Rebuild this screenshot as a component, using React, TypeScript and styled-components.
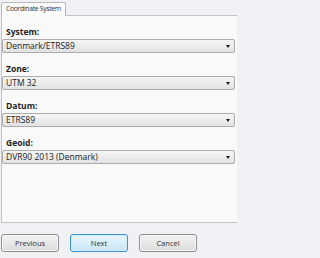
import React from 'react';
import styled, { createGlobalStyle } from 'styled-components';

const GlobalStyle = createGlobalStyle`
  html, body {
    margin: 0;
    padding: 0;
    background: #f0f0f5;
  }
  body {
    font-family: "Open Sans", "Noto Sans", sans-serif;
    color: #1e1e1e;
  }
`;

interface Field {
  label: string;
  value: string;
}

const fields: Field[] = [
  { label: 'System:', value: 'Denmark/ETRS89' },
  { label: 'Zone:', value: 'UTM 32' },
  { label: 'Datum:', value: 'ETRS89' },
  { label: 'Geoid:', value: 'DVR90 2013 (Denmark)' },
];

function Dropdown({ value }: { value: string }) {
  return (
    <UISelect>
      <UISelectText>{value}</UISelectText>
      <UIArrow viewBox="0 0 4 3" width={4} height={3}>
        <path d="M0 0 H4 L2 3 Z" fill="#1a1a1a" />
      </UIArrow>
    </UISelect>
  );
}

export default function App() {
  return (
    <>
      <GlobalStyle />
      <UIWindow>
        <UITabStrip>
          <UITab>Coordinate System</UITab>
        </UITabStrip>
        <UIPanel>
          {fields.map(field => (
            <UIField key={field.label}>
              <UILabel>{field.label}</UILabel>
              <Dropdown value={field.value} />
            </UIField>
          ))}
        </UIPanel>
        <UIButtonRow>
          <UIButton>Previous</UIButton>
          <UIButton primary>Next</UIButton>
          <UIButton>Cancel</UIButton>
        </UIButtonRow>
      </UIWindow>
    </>
  );
}

const UIWindow = styled.div`
  width: 237px;
  height: 258px;
  display: flex;
  flex-direction: column;
  box-sizing: border-box;
`;

const UITabStrip = styled.div`
  display: flex;
  padding: 2px 0 0 1px;
  height: 13px;
  position: relative;
  z-index: 1;
`;

const UITab = styled.div`
  height: 14px;
  box-sizing: border-box;
  padding: 0 4px;
  border: 1px solid #b9b9b9;
  border-bottom: none;
  border-radius: 2px 2px 0 0;
  background: #fafafa;
  font-size: 6.8px;
  letter-spacing: -0.3px;
  line-height: 12px;
  color: #333;
  white-space: nowrap;
`;

const UIPanel = styled.div`
  height: 208px;
  box-sizing: border-box;
  margin-left: 1px;
  border: 1px solid #c4c4c4;
  border-right: none;
  background: #f9f9f9;
  padding: 10px 0 0 0;
  display: flex;
  flex-direction: column;
  gap: 10px;
`;

const UIField = styled.div`
  display: flex;
  flex-direction: column;
`;

const UILabel = styled.div`
  font-weight: bold;
  font-size: 8.5px;
  line-height: 12px;
  padding: 0 0 1px 4px;
  color: #1e1e1e;
`;

const UISelect = styled.div`
  height: 14px;
  width: 233px;
  box-sizing: border-box;
  border: 1px solid #acacac;
  border-radius: 2px;
  background: linear-gradient(#f5f5f5, #e2e2e2);
  display: flex;
  align-items: center;
  justify-content: space-between;
  padding: 0 4px 0 3px;
`;

const UISelectText = styled.span`
  font-size: 8.5px;
  line-height: 12px;
  color: #1e1e1e;
`;

const UIArrow = styled.svg`
  display: block;
`;

const UIButtonRow = styled.div`
  display: flex;
  gap: 11px;
  padding: 11px 0 0 1px;
`;

const UIButton = styled.button<{ primary?: boolean }>`
  width: 58px;
  height: 18px;
  box-sizing: border-box;
  padding: 0;
  border-radius: 3px;
  font-family: "Open Sans", "Noto Sans", sans-serif;
  font-size: 7.5px;
  color: #333;
  border: 1px solid ${p => (p.primary ? '#3c95cf' : '#8f8f8f')};
  background: ${p =>
    p.primary
      ? 'linear-gradient(#eaf6fd, #c9e6f7)'
      : 'linear-gradient(#f4f4f4, #dcdcdc)'};
  box-shadow: inset 0 0 0 1px ${p => (p.primary ? '#d3edfb' : '#f8f8f8')};
`;
